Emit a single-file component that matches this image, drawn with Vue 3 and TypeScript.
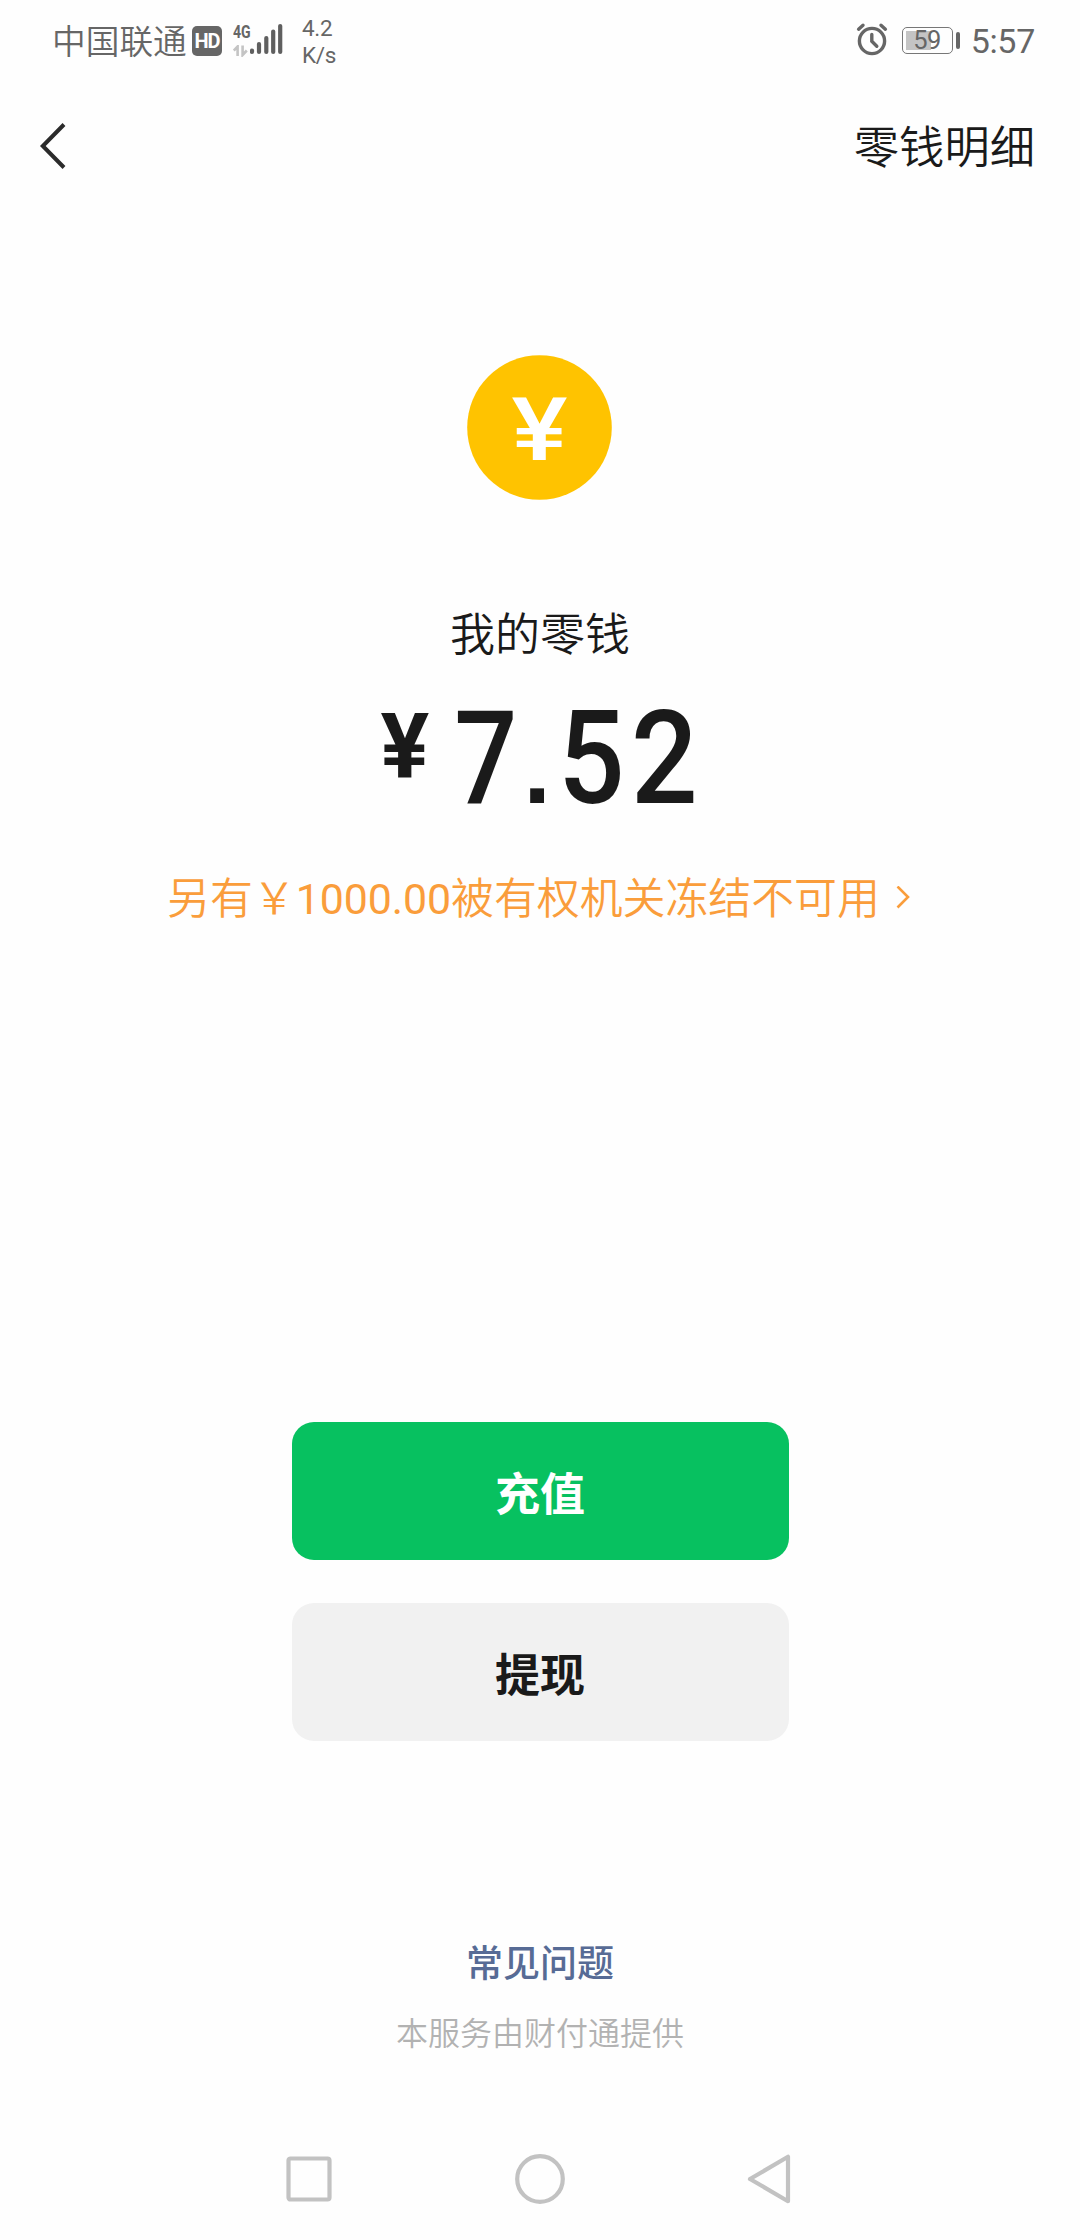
<script setup lang="ts">
interface Bar {
  x: number
  top: number
}

const carrier = '中国联通'
const clock = '5:57'
const battery = 59
const balance = ['7', '.', '5', '2']
const bars: Bar[] = [
  { x: 2, top: 27.5 },
  { x: 9, top: 21 },
  { x: 16.3, top: 15 },
  { x: 23.2, top: 8.5 },
  { x: 30.2, top: 3 },
]
</script>

<template>
  <div class="screen">
    <header class="status">
      <span class="carrier">{{ carrier }}</span>
      <span class="hd">HD</span>
      <div class="network">
        <div class="gen">
          <span class="gen-label">4G</span>
          <svg width="15" height="12" viewBox="0 0 15 12" fill="none" stroke="#c4c4c4" stroke-width="2.6">
            <path d="M0.8 5.5L4.6 1.5V11" />
            <path d="M9.6 0.5V10L13.8 5.5" />
          </svg>
        </div>
        <svg class="signal" width="34" height="32" viewBox="0 0 34 32" stroke="#5f5f5f" stroke-width="4.2" stroke-linecap="round">
          <line v-for="b in bars" :key="b.x" :x1="b.x" :x2="b.x" :y1="b.top" y2="29" />
        </svg>
      </div>
      <div class="speed">
        <span>4.2</span>
        <span>K/s</span>
      </div>
      <div class="status-right">
        <svg class="alarm" width="32" height="34" viewBox="0 0 32 34" fill="none" stroke="#666" stroke-width="3.4" stroke-linecap="round">
          <circle cx="16" cy="19" r="12.6" />
          <path d="M15.8 12.5V19.2L20.8 24.2" />
          <path d="M2.6 7.2L7 3.2M29.4 7.2L25 3.2" />
        </svg>
        <div class="battery">
          <div class="battery-fill" :style="{ width: battery + '%' }"></div>
          <span class="battery-text">{{ battery }}</span>
        </div>
        <div class="battery-tip"></div>
        <span class="clock">{{ clock }}</span>
      </div>
    </header>

    <nav class="nav">
      <svg width="30" height="50" viewBox="0 0 30 50" fill="none" stroke="#2b2b2b" stroke-width="4">
        <path d="M26 3.5L4.8 25L26 46.5" />
      </svg>
      <span class="nav-link">零钱明细</span>
    </nav>

    <main class="main">
      <svg class="coin" width="146" height="146" viewBox="0 0 146 146">
        <circle cx="72.5" cy="73.5" r="72.3" fill="#ffc300" />
        <text class="coin-yen" x="72.5" y="105.5" text-anchor="middle" textLength="56" lengthAdjust="spacingAndGlyphs">¥</text>
      </svg>
      <div class="label">我的零钱</div>
      <div class="amount">
        <span class="yen">¥</span>
        <span class="digits"><span v-for="(d, i) in balance" :key="i" :class="d === '.' ? 'dot' : 'digit'">{{ d }}</span></span>
      </div>
      <div class="notice">
        <span>另有￥<span class="sum">1000.00</span>被有权机关冻结不可用</span>
        <svg width="14" height="26" viewBox="0 0 14 26" fill="none" stroke="#fa9d3b" stroke-width="2.6">
          <path d="M1.5 0.5L12 11L1.5 21.5" />
        </svg>
      </div>
      <button class="btn primary">充值</button>
      <button class="btn plain">提现</button>
    </main>

    <footer class="foot">
      <div class="faq">常见问题</div>
      <div class="provider">本服务由财付通提供</div>
    </footer>

    <div class="sysnav">
      <svg width="46" height="46" viewBox="0 0 46 46"><rect x="2.5" y="2.5" width="41" height="41" rx="2" /></svg>
      <svg width="50" height="50" viewBox="0 0 50 50"><circle cx="25" cy="25" r="22.8" /></svg>
      <svg width="44" height="50" viewBox="0 0 44 50"><path d="M41 2.8V47.2L3 25Z" /></svg>
    </div>
  </div>
</template>

<style>
body {
  margin: 0;
  background: #fefefe;
}
</style>

<style scoped>
.screen {
  width: 1080px;
  height: 2240px;
  display: flex;
  flex-direction: column;
  overflow: hidden;
  background: #fefefe;
  color: #1a1a1a;
  font-family: Roboto, "Noto Sans CJK SC", sans-serif;
}
.status {
  height: 82px;
  flex: none;
  display: flex;
  align-items: flex-start;
  padding: 0 45px 0 52px;
  box-sizing: border-box;
  color: #666;
}
.carrier {
  margin-top: 23px;
  width: 140px;
  font-size: 33.7px;
  line-height: 40px;
  font-weight: 350;
  white-space: nowrap;
}
.hd {
  margin-top: 26px;
  width: 30px;
  height: 30px;
  border-radius: 5px;
  background: #666;
  color: #fff;
  font-size: 20px;
  line-height: 31px;
  font-weight: 700;
  text-align: center;
  letter-spacing: -1px;
}
.network {
  display: flex;
  margin: 24px 0 0 11px;
}
.gen {
  width: 17px;
  display: flex;
  flex-direction: column;
}
.gen-label {
  height: 21px;
  font-size: 19px;
  line-height: 16px;
  font-weight: 700;
  transform: scaleX(0.74);
  transform-origin: 0 0;
}
.signal {
  display: block;
  margin-top: -1px;
}
.speed {
  margin: 15px 0 0 18px;
  display: flex;
  flex-direction: column;
  font-size: 22.5px;
  line-height: 27px;
  letter-spacing: -0.3px;
}
.status-right {
  margin-left: auto;
  display: flex;
}
.alarm {
  margin-top: 22px;
}
.battery {
  position: relative;
  margin: 27px 0 0 14px;
  width: 51px;
  height: 27px;
  box-sizing: border-box;
  border: 1.5px solid #777;
  border-radius: 5px;
  padding: 3px;
}
.battery-fill {
  height: 100%;
  background: #c4c4c4;
}
.battery-text {
  position: absolute;
  inset: 0;
  text-align: center;
  font-size: 25.5px;
  line-height: 25px;
  letter-spacing: -0.5px;
}
.battery-tip {
  margin: 32px 0 0 3px;
  width: 4px;
  height: 17px;
  border-radius: 2px;
  background: #666;
}
.clock {
  margin: 21px 0 0 11px;
  font-size: 34px;
  line-height: 40px;
  letter-spacing: -0.3px;
}
.nav {
  height: 128px;
  flex: none;
  display: flex;
  align-items: center;
  justify-content: space-between;
  padding: 0 45px 0 38px;
}
.nav-link {
  font-size: 45.3px;
  line-height: 60px;
  font-weight: 350;
  padding-top: 5px;
}
.main {
  height: 1531px;
  flex: none;
  display: flex;
  flex-direction: column;
  align-items: center;
}
.coin {
  margin-top: 144px;
  flex: none;
}
.coin-yen {
  font: 500 87px Roboto, sans-serif;
  fill: #fff;
}
.label {
  margin-top: 106px;
  font-size: 45px;
  line-height: 60px;
  font-weight: 350;
}
.amount {
  margin-top: 33px;
  height: 120px;
  display: flex;
  align-items: flex-start;
  line-height: 120px;
}
.yen {
  width: 53.5px;
  text-align: center;
  font-size: 91px;
  line-height: 96px;
  font-weight: 700;
}
.digits {
  margin-left: 17px;
  font-size: 129px;
  font-weight: 500;
  white-space: nowrap;
}
.digit,
.dot {
  display: inline-block;
  text-align: center;
}
.digit {
  width: 73.5px;
  transform: scaleX(0.86);
}
.dot ~ .digit {
  transform: translateX(-0.5px) scaleX(0.91);
}
.dot {
  width: 29.5px;
  margin-right: 3px;
  font-family: "Liberation Sans", sans-serif;
  font-size: 98px;
  font-weight: 700;
}
.notice {
  margin-top: 50px;
  display: flex;
  align-items: center;
  gap: 16px;
  margin-left: -3px;
  font-size: 42.9px;
  line-height: 60px;
  font-weight: 350;
  color: #fa9d3b;
  white-space: nowrap;
}
.sum {
  font-weight: 400;
  letter-spacing: -0.1px;
}
.btn {
  width: 497px;
  height: 138px;
  flex: none;
  border: 0;
  border-radius: 22px;
  padding: 1px 0 0;
  font-family: inherit;
  font-size: 45px;
  font-weight: 700;
}
.primary {
  margin-top: 493px;
  background: #07c160;
  color: #fff;
}
.plain {
  margin-top: 43px;
  background: #f1f1f1;
  color: #1a1a1a;
}
.foot {
  padding-top: 199px;
  display: flex;
  flex-direction: column;
  align-items: center;
}
.faq {
  font-size: 37px;
  line-height: 50px;
  font-weight: 500;
  color: #576b95;
}
.provider {
  margin-top: 24px;
  font-size: 32px;
  line-height: 40px;
  font-weight: 350;
  color: #b2b2b2;
}
.sysnav {
  margin: auto 289px 36px 286px;
  display: flex;
  align-items: center;
  justify-content: space-between;
  fill: none;
  stroke: #c2c2c2;
  stroke-width: 4.2;
  stroke-linejoin: round;
}
</style>
